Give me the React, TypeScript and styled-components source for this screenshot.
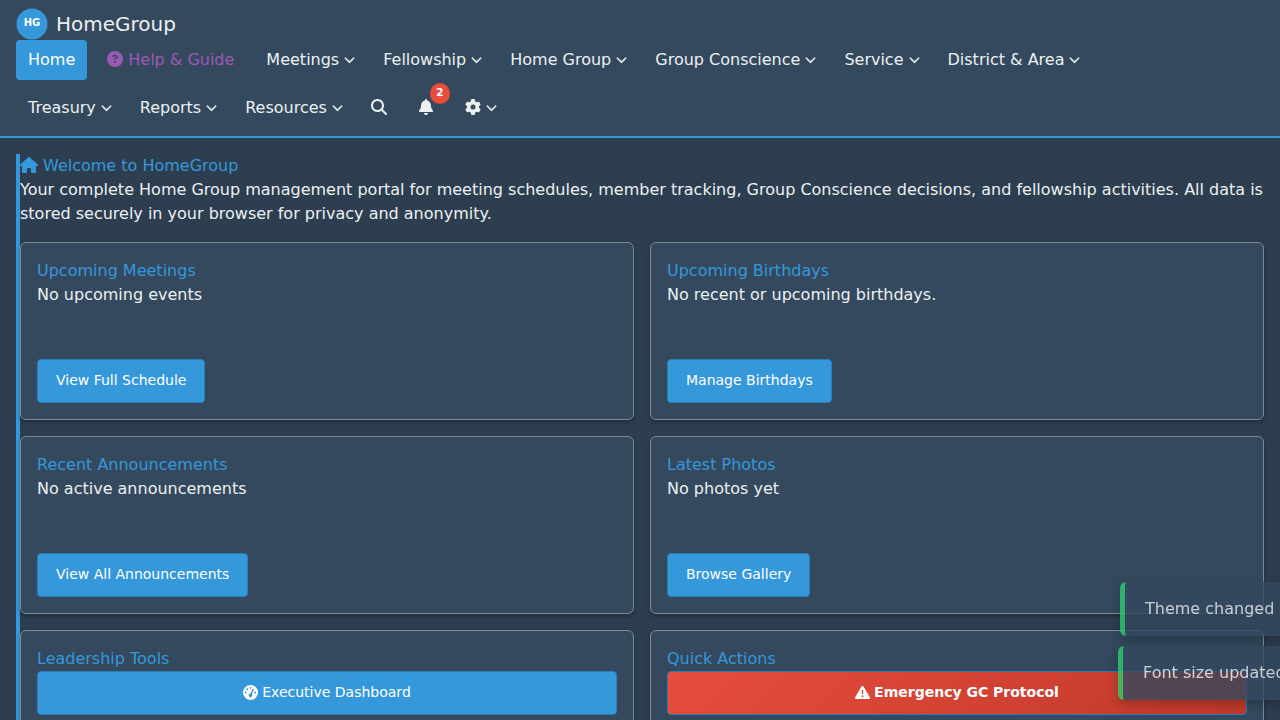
import React from "react";
import styled, { createGlobalStyle, css } from "styled-components";
import {
  FaBell,
  FaChevronDown,
  FaCircleQuestion,
  FaGaugeHigh,
  FaGear,
  FaHouse,
  FaMagnifyingGlass,
  FaTriangleExclamation,
} from "react-icons/fa6";

const GlobalStyle = createGlobalStyle`
  *, *::before, *::after { box-sizing: border-box; }
  html { min-height: 100%; }
  body {
    margin: 0;
    min-height: 100vh;
    background: #2c3e50;
    color: #ecf0f1;
    font: 16px/24px "DejaVu Sans", sans-serif;
  }
  h1, h2, p { margin: 0; font-size: 16px; font-weight: 400; }
  button { font-family: inherit; cursor: pointer; }
`;

const Header = styled.header`
  padding: 8px 16px;
  background: #34495e;
  border-bottom: 2px solid #3498db;
`;

const Brand = styled.a`
  display: flex;
  align-items: center;
  gap: 8px;
  width: fit-content;
  color: #ecf0f1;
  font-size: 20px;
  line-height: 32px;
  text-decoration: none;
`;

const Logo = styled.svg`
  display: block;
  width: 32px;
  height: 32px;
`;

const Nav = styled.nav`
  display: flex;
  flex-wrap: wrap;
  gap: 8px 4px;
  padding-right: 80px;
`;

const navItem = css`
  position: relative;
  display: flex;
  align-items: center;
  gap: 5px;
  height: 40px;
  padding: 0 12px;
  border: 0;
  border-radius: 4px;
  background: none;
  color: #ecf0f1;
  font-size: 16px;
  line-height: 24px;
  text-decoration: none;
  white-space: nowrap;

  svg {
    margin-bottom: 2px;
  }
`;

const NavLink = styled.a<{ $active?: boolean; $help?: boolean }>`
  ${navItem}
  ${(p) => p.$active && css`background: #3498db; color: #fff;`}
  ${(p) => p.$help && css`margin: 0 4px; color: #9b59b6;`}
`;

const NavButton = styled.button<{ $spaced?: boolean }>`
  ${navItem}
  ${(p) => p.$spaced && css`margin: 0 4px;`}
`;

const Chevron = styled(FaChevronDown)`
  width: 11px;
  height: 13px;
  stroke-width: 16px;
`;

const BellIcon = styled(FaBell)`
  width: 14px;
  height: 16px;
`;

const Badge = styled.span`
  position: absolute;
  top: -5px;
  right: -5px;
  width: 20px;
  height: 21px;
  border-radius: 50%;
  background: #e74c3c;
  color: #fff;
  font-size: 11px;
  font-weight: 700;
  line-height: 19px;
  text-align: center;
`;

const Main = styled.main`
  padding: 16px;
`;

const Welcome = styled.section`
  border-left: 4px solid #3498db;
`;

const PageTitle = styled.h1`
  display: flex;
  align-items: center;
  gap: 5px;
  color: #3498db;
`;

const HouseIcon = styled(FaHouse)`
  width: 18px;
  height: 16px;
  margin-bottom: 2px;
`;

const CardGrid = styled.div`
  display: grid;
  grid-template-columns: repeat(2, minmax(0, 1fr));
  gap: 16px;
  margin-top: 16px;
`;

const Card = styled.article`
  min-height: 178px;
  padding: 16px;
  border: 1px solid #7f8c8d;
  border-radius: 6px;
  background: #34495e;
  box-shadow: 0 2px 4px rgba(0, 0, 0, 0.3);
`;

const CardTitle = styled.h2`
  color: #3498db;
`;

const CardBody = styled.p`
  min-height: 60px;
  margin-bottom: 16px;
`;

const Button = styled.button<{ $block?: boolean; $danger?: boolean }>`
  display: flex;
  align-items: center;
  justify-content: center;
  gap: 4px;
  width: ${(p) => (p.$block ? "100%" : "auto")};
  height: 44px;
  padding: 0 18px 2px;
  border: 1px solid #2980b9;
  border-radius: 4px;
  background: ${(p) => (p.$danger ? "linear-gradient(135deg, #e74c3c, #c0392b)" : "#3498db")};
  color: #fff;
  font-size: 14px;
  font-weight: ${(p) => (p.$danger ? 700 : 400)};
  line-height: 22px;

  svg {
    width: 15px;
    height: 15px;
  }
`;

const Toasts = styled.div`
  position: fixed;
  left: calc(100% - 162px);
  bottom: 20px;
  display: grid;
  gap: 10px;
`;

const Toast = styled.div<{ $shift?: number }>`
  width: 300px;
  margin-left: ${(p) => p.$shift ?? 0}px;
  padding: 15px 20px;
  border-left: 5px solid #2ecc71;
  border-radius: 6px;
  background: #34495e;
  box-shadow: 0 4px 12px rgba(0, 0, 0, 0.3);
  opacity: 0.8;
  white-space: nowrap;
`;

const menus = [
  "Meetings",
  "Fellowship",
  "Home Group",
  "Group Conscience",
  "Service",
  "District & Area",
  "Treasury",
  "Reports",
  "Resources",
];

const cards = [
  { title: "Upcoming Meetings", text: "No upcoming events", action: "View Full Schedule" },
  { title: "Upcoming Birthdays", text: "No recent or upcoming birthdays.", action: "Manage Birthdays" },
  { title: "Recent Announcements", text: "No active announcements", action: "View All Announcements" },
  { title: "Latest Photos", text: "No photos yet", action: "Browse Gallery" },
];

export default function App() {
  return (
    <>
      <GlobalStyle />
      <Header>
        <Brand href="#home">
          <Logo viewBox="0 0 32 32" aria-hidden="true">
            <circle cx="16" cy="16" r="15.5" fill="#3498db" />
            <text x="16" y="18" textAnchor="middle" fill="#fff" fontSize="10" fontWeight="700">
              HG
            </text>
          </Logo>
          HomeGroup
        </Brand>
        <Nav>
          <NavLink href="#home" $active>
            Home
          </NavLink>
          <NavLink href="#help" $help>
            <FaCircleQuestion />
            Help &amp; Guide
          </NavLink>
          {menus.map((label) => (
            <NavButton key={label} type="button">
              {label}
              <Chevron />
            </NavButton>
          ))}
          <NavButton type="button" aria-label="Search">
            <FaMagnifyingGlass />
          </NavButton>
          <NavButton type="button" aria-label="Notifications" $spaced>
            <BellIcon />
            <Badge>2</Badge>
          </NavButton>
          <NavButton type="button" aria-label="Settings">
            <FaGear />
            <Chevron />
          </NavButton>
        </Nav>
      </Header>
      <Main>
        <Welcome>
          <PageTitle>
            <HouseIcon />
            Welcome to HomeGroup
          </PageTitle>
          <p>
            Your complete Home Group management portal for meeting schedules, member tracking, Group
            Conscience decisions, and fellowship activities. All data is stored securely in your
            browser for privacy and anonymity.
          </p>
          <CardGrid>
            {cards.map((card) => (
              <Card key={card.title}>
                <CardTitle>{card.title}</CardTitle>
                <CardBody>{card.text}</CardBody>
                <Button type="button">{card.action}</Button>
              </Card>
            ))}
            <Card>
              <CardTitle>Leadership Tools</CardTitle>
              <Button type="button" $block>
                <FaGaugeHigh />
                Executive Dashboard
              </Button>
            </Card>
            <Card>
              <CardTitle>Quick Actions</CardTitle>
              <Button type="button" $block $danger>
                <FaTriangleExclamation />
                Emergency GC Protocol
              </Button>
            </Card>
          </CardGrid>
        </Welcome>
      </Main>
      <Toasts role="status">
        <Toast $shift={2}>Theme changed</Toast>
        <Toast>Font size updated</Toast>
      </Toasts>
    </>
  );
}
